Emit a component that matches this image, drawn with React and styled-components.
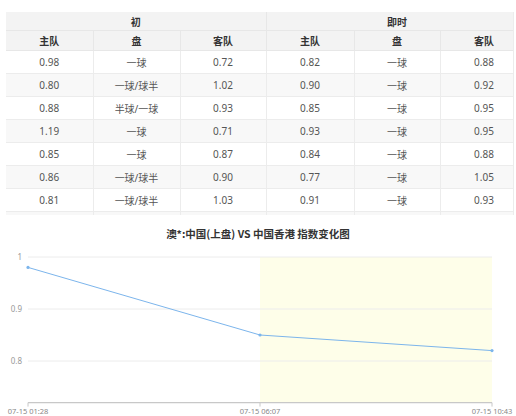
import React from 'react';
import styled, { createGlobalStyle } from 'styled-components';

const GlobalStyle = createGlobalStyle`
  html, body {
    margin: 0;
    padding: 0;
    background: #fff;
    overflow: hidden;
  }
  body {
    font-family: "Noto Sans", "Noto Sans CJK SC", sans-serif;
    color: #555;
  }
`;

const Page = styled.div`
  width: 516px;
  height: 416px;
  padding-top: 12px;
  box-sizing: border-box;
`;

const TableWrap = styled.div`
  margin-left: 6px;
  width: 508px;
  height: 203px;
  overflow: hidden;
  border-right: 1px solid #ececec;
  box-sizing: border-box;
`;

const Table = styled.table`
  width: 522px;
  border-collapse: collapse;
  table-layout: fixed;
  font-size: 10px;
`;

const GroupCell = styled.th`
  height: 18px;
  padding: 0;
  background: #f3f3f3;
  border: 1px solid #e7e7e7;
  border-top: none;
  font-weight: bold;
  color: #333;
  font-size: 10px;
  ${({ $first }) => $first && 'border-left: none;'}
`;

const HeadCell = styled.th`
  height: 19px;
  padding: 0;
  background: #f3f3f3;
  border: 1px solid #e7e7e7;
  font-weight: bold;
  color: #333;
  font-size: 10px;
  ${({ $first }) => $first && 'border-left: none;'}
`;

const Row = styled.tr`
  background: ${({ $alt }) => ($alt ? '#f8f8f8' : '#fff')};
`;

const Cell = styled.td`
  height: 22px;
  padding: 0;
  text-align: center;
  border: 1px solid #ececec;
  color: #555;
  ${({ $first }) => $first && 'border-left: none;'}
`;

const ChartBlock = styled.section`
  margin-top: 12px;
  display: flex;
  flex-direction: column;
  align-items: center;
`;

const ChartTitle = styled.h2`
  margin: 0;
  font-size: 10.5px;
  line-height: 14px;
  font-weight: bold;
  color: #333;
  font-family: "Noto Sans CJK SC", "Noto Sans", sans-serif;
`;

const ChartSvg = styled.svg`
  display: block;
  margin-top: 4px;
`;

const rows = [
  ['0.98', '一球', '0.72', '0.82', '一球', '0.88'],
  ['0.80', '一球/球半', '1.02', '0.90', '一球', '0.92'],
  ['0.88', '半球/一球', '0.93', '0.85', '一球', '0.95'],
  ['1.19', '一球', '0.71', '0.93', '一球', '0.95'],
  ['0.85', '一球', '0.87', '0.84', '一球', '0.88'],
  ['0.86', '一球/球半', '0.90', '0.77', '一球', '1.05'],
  ['0.81', '一球/球半', '1.03', '0.91', '一球', '0.93'],
  ['', '', '', '', '', ''],
];

const widths = [87, 87, 86, 88, 86, 88];

// chart geometry, svg top sits at y=245 in the page
const top = 12;
const yOf = (v) => top + (1 - v) * 520;
const x0 = 28;
const x1 = 260;
const x2 = 492;
const bottom = yOf(0.72);
const points = [
  [x0, yOf(0.98)],
  [x1, yOf(0.85)],
  [x2, yOf(0.82)],
];

const Chart = () => (
  <ChartSvg width="516" height="171" viewBox="0 0 516 171">
    <rect x={x1} y={top} width={x2 - x1} height={bottom - top} fill="#fefee9" />
    {[1, 0.9, 0.8].map((v) => (
      <g key={v}>
        <line x1={x0} x2={x2} y1={yOf(v)} y2={yOf(v)} stroke="#ececec" strokeWidth="1" />
        <text
          x="22"
          y={yOf(v) + 3}
          textAnchor="end"
          fontSize="8"
          fill="#999"
          fontFamily="Noto Sans, sans-serif"
        >
          {v === 1 ? '1' : v.toFixed(1)}
        </text>
      </g>
    ))}
    <line x1={x0} x2={x2} y1={bottom} y2={bottom} stroke="#c8c8c8" strokeWidth="1.2" />
    {[
      [x0, '07-15 01:28'],
      [x1, '07-15 06:07'],
      [x2, '07-15 10:43'],
    ].map(([x, label]) => (
      <g key={label}>
        <line x1={x} x2={x} y1={bottom} y2={bottom + 4} stroke="#c8c8c8" strokeWidth="1" />
        <text
          x={x}
          y={bottom + 11}
          textAnchor="middle"
          fontSize="7.5"
          fill="#888"
          fontFamily="Noto Sans, sans-serif"
        >
          {label}
        </text>
      </g>
    ))}
    <polyline
      points={points.map((p) => p.join(',')).join(' ')}
      fill="none"
      stroke="#7cb5ec"
      strokeWidth="1"
    />
    {points.map(([x, y]) => (
      <circle key={x} cx={x} cy={y} r="1.6" fill="#7cb5ec" />
    ))}
  </ChartSvg>
);

const App = () => (
  <Page>
    <GlobalStyle />
    <TableWrap>
      <Table>
        <colgroup>
          {widths.map((w, i) => (
            <col key={i} style={{ width: w }} />
          ))}
        </colgroup>
        <thead>
          <tr>
            <GroupCell colSpan={3} $first>初</GroupCell>
            <GroupCell colSpan={3}>即时</GroupCell>
          </tr>
          <tr>
            {['主队', '盘', '客队', '主队', '盘', '客队'].map((h, i) => (
              <HeadCell key={i} $first={i === 0}>{h}</HeadCell>
            ))}
          </tr>
        </thead>
        <tbody>
          {rows.map((r, ri) => (
            <Row key={ri} $alt={ri % 2 === 1}>
              {r.map((c, ci) => (
                <Cell key={ci} $first={ci === 0}>{c || '\u00a0'}</Cell>
              ))}
            </Row>
          ))}
        </tbody>
      </Table>
    </TableWrap>
    <ChartBlock>
      <ChartTitle>澳*:中国(上盘) VS 中国香港 指数变化图</ChartTitle>
      <Chart />
    </ChartBlock>
  </Page>
);

export default App;
